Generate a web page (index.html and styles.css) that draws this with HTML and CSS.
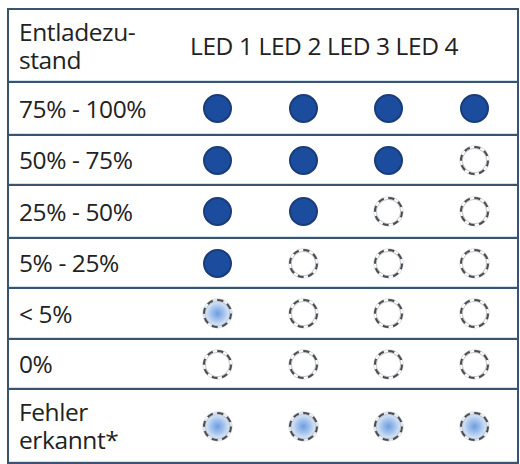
FILE: index.html
```html
<!DOCTYPE html>
<html lang="de">
<head>
<meta charset="utf-8">
<title>Entladezustand</title>
<link rel="stylesheet" href="styles.css">
</head>
<body>
<div class="table">
  <div class="row head">
    <div class="label">Entladezu-<br>stand</div>
    <div class="leds">LED 1 LED 2 LED 3 LED 4</div>
  </div>
  <div class="row r1">
    <div class="label">75% - 100%</div>
    <div class="cell"><span class="dot on"></span></div>
    <div class="cell"><span class="dot on"></span></div>
    <div class="cell"><span class="dot on"></span></div>
    <div class="cell"><span class="dot on"></span></div>
  </div>
  <div class="row r2">
    <div class="label">50% - 75%</div>
    <div class="cell"><span class="dot on"></span></div>
    <div class="cell"><span class="dot on"></span></div>
    <div class="cell"><span class="dot on"></span></div>
    <div class="cell"><span class="dot off"></span></div>
  </div>
  <div class="row r1">
    <div class="label">25% - 50%</div>
    <div class="cell"><span class="dot on"></span></div>
    <div class="cell"><span class="dot on"></span></div>
    <div class="cell"><span class="dot off"></span></div>
    <div class="cell"><span class="dot off"></span></div>
  </div>
  <div class="row r2">
    <div class="label">5% - 25%</div>
    <div class="cell"><span class="dot on"></span></div>
    <div class="cell"><span class="dot off"></span></div>
    <div class="cell"><span class="dot off"></span></div>
    <div class="cell"><span class="dot off"></span></div>
  </div>
  <div class="row r3">
    <div class="label">&lt; 5%</div>
    <div class="cell"><span class="dot glow"></span></div>
    <div class="cell"><span class="dot off"></span></div>
    <div class="cell"><span class="dot off"></span></div>
    <div class="cell"><span class="dot off"></span></div>
  </div>
  <div class="row r2">
    <div class="label">0%</div>
    <div class="cell"><span class="dot off"></span></div>
    <div class="cell"><span class="dot off"></span></div>
    <div class="cell"><span class="dot off"></span></div>
    <div class="cell"><span class="dot off"></span></div>
  </div>
  <div class="row last">
    <div class="label">Fehler<br>erkannt*</div>
    <div class="cell"><span class="dot glow"></span></div>
    <div class="cell"><span class="dot glow"></span></div>
    <div class="cell"><span class="dot glow"></span></div>
    <div class="cell"><span class="dot glow"></span></div>
  </div>
</div>
</body>
</html>
```
FILE: styles.css
```css
html, body {
  margin: 0;
  background: #ffffff;
}
body {
  padding: 8px 0 0 7px;
  font-family: "Open Sans", "Noto Sans", sans-serif;
  font-size: 24.5px;
  color: #222222;
}
.table {
  width: 512px;
  box-sizing: border-box;
  border: 2px solid #3a5470;
  border-bottom: none;
}
.row {
  display: grid;
  grid-template-columns: 166px repeat(4, 1fr);
  align-items: center;
  border-bottom: 2px solid #3a5470;
  box-shadow: inset 0 -1px 0 #cfe0ee;
}
.head { height: 71px; }
.r1 { height: 51px; }
.r2 { height: 48px; }
.r3 { height: 49px; }
.last { height: 72px; }
.label {
  padding-left: 10px;
  line-height: 28px;
  letter-spacing: -0.4px;
  white-space: nowrap;
}
.leds {
  grid-column: 2 / 6;
  padding-left: 15px;
  letter-spacing: -0.4px;
  white-space: nowrap;
}
.cell {
  display: flex;
  justify-content: center;
  align-items: center;
}
.dot {
  display: block;
  width: 29px;
  height: 29px;
  border-radius: 50%;
  box-sizing: border-box;
}
.on {
  background: #1c4c9d;
  border: 2px solid #1a3c78;
}
.off {
  background: #ffffff;
  border: 2px dashed #4a4d52;
  box-shadow: inset 0 0 0 1px #c4c6c9, 0 0 0 0.5px #c4c6c9;
}
.glow {
  background: radial-gradient(circle at 50% 50%, #6d9de0 0%, #a9c6ee 40%, #eef4fc 80%);
  border: 2px dashed #4a4d52;
  box-shadow: inset 0 0 0 1px #c4c6c9, 0 0 0 0.5px #c4c6c9;
}
```
